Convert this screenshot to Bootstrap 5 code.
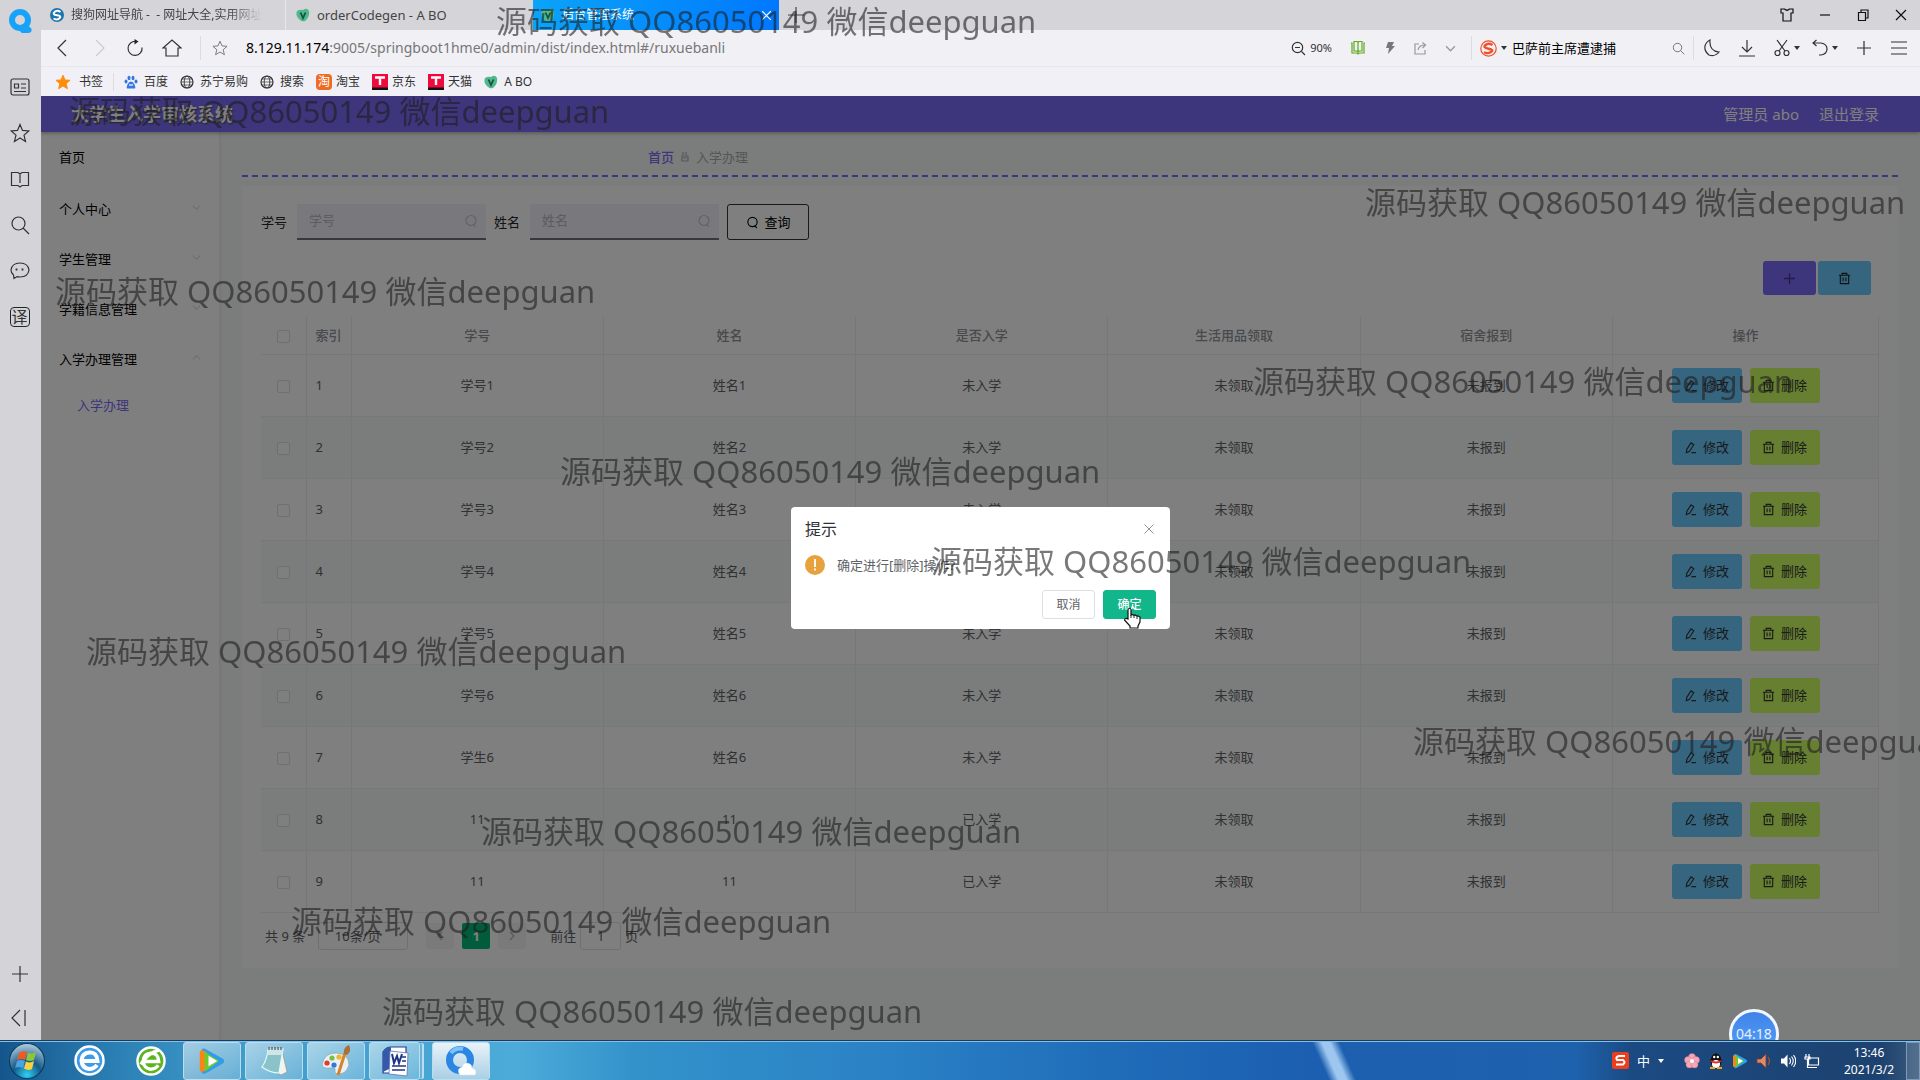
<!DOCTYPE html>
<html lang="zh-CN">
<head>
<meta charset="utf-8">
<meta name="viewport" content="width=device-width, initial-scale=1">
<title>后台管理系统</title>
<link href="https://cdn.jsdelivr.net/npm/bootstrap@5.3.0/dist/css/bootstrap.min.css" rel="stylesheet">
<style>
:root{--ui:"Noto Sans","Noto Sans CJK SC",sans-serif;--purple:#7a6cf8;--line:#ebeef0}
body{font-family:var(--ui);font-size:13px;line-height:20px;color:#222;background:#f6faf8}
svg{display:block;flex:none;fill:none;stroke:currentColor;stroke-width:1.2}
a{color:inherit;text-decoration:none}
.plain{background:none;border:0;padding:0;color:inherit;line-height:1}
/* browser side rail */
.rail{width:41px;background:#d4d3d8;color:#333;padding:9px 2px 12px 0;flex:none}
.rail .tools{gap:26px}
.rail .tools svg,.rail .ends svg{width:20px;height:20px}
.rail .logo{margin-bottom:44px}
/* tab strip */
.tabs{height:30px;background:#d5d4d9;font-size:12px;color:#444}
.tab{height:30px;gap:7px;white-space:nowrap;overflow:hidden}
.tab-one{width:245px;padding:0 16px 0 9px;border-right:1px solid #e8e7ec}
.tab-two{width:247px;padding-left:10px;font-size:13px}
.tab-on{width:246px;padding:0 8px;color:#fff;background:linear-gradient(100deg,#0ba4f8,#0077ff)}
.fade-end{-webkit-mask-image:linear-gradient(90deg,#000 82%,transparent);overflow:hidden}
.winbtns{gap:22px;padding-right:11px;color:#111}
/* address bar */
.addr{height:37px;background:#f1f0f5;border-bottom:1px solid #e6e8ee;color:#333}
.addr-l{padding-left:13px;gap:18px;flex:1 1 auto;min-width:0}
.addr-in{background:none;border:0;outline:0;flex:none;width:150px;padding:0;margin-left:-13px}
.url{font-size:14px;color:#777;padding:0;white-space:nowrap}
.url b{font-weight:400;color:#000}
.vsep{width:1px;height:24px;background:#dddce2;flex:none}
.addr-l .vsep{margin-right:-7px}
.addr-r .vsep{margin:0 -10px 0 -3px}
.addr-r .vsep.after{margin:0 -8px 0 -10px}
.addr-r{gap:18px;padding-right:12px}
.caret{width:0;height:0;border:3px solid transparent;border-top:4px solid #333;border-bottom:0;display:block}
.marks{height:29px;background:#f1f0f6;font-size:12px;color:#333;padding-left:14px;gap:12px}
.marks a{gap:6px}
.marks .wide{gap:8px}
.marks .vsep{height:18px;margin:0 -2px}
.marks a svg,.tab svg{width:14px;height:14px}
/* application */
.topbar{height:36px;background:var(--purple);color:#fff;padding:0 41px 0 30px;box-shadow:0 1px 4px rgba(0,0,0,.35);z-index:1}
.topbar h1{font-size:18px;line-height:36px;font-weight:700;margin:0;text-shadow:1px 1px 2px #444}
.topbar .who{font-size:15px}
.side{width:178px;background:#fff;padding:0 18px;flex:none;color:#000;box-shadow:1px 0 3px rgba(0,0,0,.08)}
.side a{height:50px}
.side a:first-child{margin-bottom:2px}
.side svg{color:#dcdce2;margin-top:-4px}
.side .sub{height:42px;padding-left:18px;color:var(--purple)}
.main{padding:0 22px 0 23px;min-width:0}
.crumbs{height:45px;border-bottom:2px dashed var(--purple);padding:7px 0 0 406px;gap:7px;color:#aaa;margin-bottom:9px}
.crumbs a{color:var(--purple);font-weight:500}
.panel{background:#fff;padding:18px 19px 18px}
.seek label{margin-right:10px}
.field{width:189px;height:36px;background:#f0f0fb;border-bottom:2px solid #70737f;padding-right:8px;margin-right:8px;color:#c4c4d0}
.field input{background:none;border:0;outline:0;padding:0 0 2px 12px;width:100%;min-width:0;color:#222}
.field input::placeholder{color:#b8b8c6;opacity:1}
.btn{--bs-btn-font-size:13px;--bs-btn-line-height:20px;--bs-btn-border-radius:3px;--bs-btn-padding-x:0;--bs-btn-padding-y:0;display:inline-flex;align-items:center;justify-content:center;gap:6px}
.btn-find{width:82px;height:36px;border:1px solid #333;color:#000}
.ops{gap:2px;margin:21px 0}
.btn-sq{width:53px;height:34px;background:#6ccbff;color:#222}
.btn-add{background:var(--purple);color:#45388f}
.btn-act{width:70px;height:35px;background:#6ccbff;color:#333}
.btn-del{background:#cdff63}
.grid-t{table-layout:fixed;width:100%;margin:0;text-align:center;color:#606266;border-collapse:collapse}
.grid-t th,.grid-t td{border:1px solid var(--line);border-width:0 1px 1px 0;padding:0 11px;overflow:hidden;white-space:nowrap}
.grid-t th{height:38px;font-weight:500;color:#909399}
.grid-t td{height:62px}
.grid-t tbody tr:nth-child(even){background:#f5faf9}
.grid-t th:nth-child(2),.grid-t td:nth-child(2){text-align:left;padding:0 9px}
.tick{appearance:none;width:13px;height:13px;border:1px solid #dcdfe6;border-radius:2px;background:#fff;display:block;margin:3px auto 0}
.pager{padding-top:9px;color:#606266}
.pager select{width:90px;height:28px;border:1px solid #dcdfe6;border-radius:3px;background:none;appearance:none;text-align:center;color:#606266;font-size:13px;padding:0 19px 0 8px;margin:0 18px 0 13px}
.pgb{width:28px;height:26px;border:0;border-radius:2px;background:#f4f4f5;color:#b0b3b8;display:flex;align-items:center;justify-content:center;padding:0}
.pgb.now{background:#00b877;color:#fff;font-weight:700}
.pager input{width:41px;height:28px;border:1px solid #dcdfe6;border-radius:3px;background:none;text-align:center;color:#606266;padding:0}
/* confirm dialog */
.shade{position:absolute;inset:0;background:rgba(0,0,0,.5);z-index:5}
.dialog{width:379px;background:#fff;border-radius:4px;padding:12px 14px 10px;color:#606266}
.dialog h2{font-size:16px;line-height:20px;font-weight:400;color:#303133;margin:0}
.dialog .btn{width:53px;height:29px;border:1px solid #dcdfe6;color:#606266;font-size:12px}
.dialog .btn-yes{background:#11b68a;border-color:#11b68a;color:#fff;font-weight:500}
.warn-row{gap:12px;margin:16px 0 15px}
.pointer{position:absolute;right:29px;bottom:0}
/* watermark */
.wm{position:fixed;inset:0;overflow:hidden;pointer-events:none;z-index:20}
.wm span{position:absolute;font-size:31px;line-height:40px;white-space:nowrap;color:rgba(30,30,30,.6)}
/* taskbar */
.task{position:relative;height:40px;flex:none;border-top:1px solid #123f68;box-shadow:inset 0 1px 0 #8cc0e2;z-index:6;color:#fff;
background:linear-gradient(66deg,transparent 0 68.6%,rgba(190,225,255,.8) 69.1% 69.5%,transparent 70%),linear-gradient(90deg,#14568c 0,#2b7fb4 6%,#3f9bca 12%,#4cabd8 27%,#3392ca 33%,#2b83c6 45%,#1f6cb9 58%,#1c5fb0 68%,#1e62ae 82%,#1b4a82 85%,#1d426f 98%,#3c5c7e 100%)}
.task .app{width:58px;height:38px;border:1px solid #b9def0;border-radius:3px;background:linear-gradient(145deg,rgba(255,255,255,.55),rgba(255,255,255,.2));padding:0;display:flex;align-items:center;justify-content:center}
.task .app.live{background:linear-gradient(#e8f3fa,#a9cfe4)}
.task .word{width:51px;box-shadow:3px 0 0 -1px #6bb2d6,5px 0 0 -1px #b9def0}
.clock{font-size:12px;line-height:17px;text-align:center;width:58px}
.peek{width:14px;height:38px;border:1px solid #7d9ab6;background:rgba(255,255,255,.12)}
.timer{position:absolute;left:91.35%;bottom:-19px;transform:translateX(-50%);width:50px;height:50px;border-radius:50%;border:3px solid #f2f7ff;background:linear-gradient(#3f83ea,#58a2f5);color:#e4f0ff;font-size:14px;line-height:44px;text-align:center;z-index:5}
</style>
</head>
<body class="vh-100 d-flex flex-column overflow-hidden">
<svg width="0" height="0" class="position-absolute">
<symbol id="i-search" viewBox="0 0 20 20"><circle cx="8.500" cy="8.500" r="6.500"/><path d="M13 13l6 6"/></symbol>
<symbol id="i-o" viewBox="0 0 14 14"><circle cx="7" cy="6.500" r="5"/><path d="M9.500 10l2 3"/></symbol>
<symbol id="i-down" viewBox="0 0 10 10"><path d="M1 3l4 4 4-4"/></symbol>
<symbol id="i-star" viewBox="0 0 20 20"><path d="M10 1.500l2.500 5.900 6.300.5-4.800 4.200 1.500 6.300L10 15l-5.500 3.400L6 12.100 1.200 7.900l6.300-.5z"/></symbol>
<symbol id="i-globe" viewBox="0 0 14 14"><circle cx="7" cy="7" r="6"/><ellipse cx="7" cy="7" rx="2.800" ry="6" stroke-width=".9"/><path d="M1 7h12M2 4h10M2 10h10" stroke-width=".7"/></symbol>
<symbol id="i-vue" viewBox="0 0 14 14"><path d="M1 3q3-2 6-1 4-3 6 1 1 6-4 10-3 1-5-1-5-4-3-9z" fill="#4eb98a" stroke="none"/><path d="M4.500 4.500L7 10l2.500-5.500" stroke="#1d4f49" stroke-width="1.800"/></symbol>
<symbol id="i-trash" viewBox="0 0 14 14"><path d="M1 3.500h12M4.500 3.500v-2h5v2M2.500 3.500v9h9v-9M5.500 6v4M8.500 6v4"/></symbol>
<symbol id="i-edit" viewBox="0 0 14 14"><path d="M3 9l4.500-7 3 2L6 11l-3.500 1.500zM8 12.500h5"/></symbol>
<symbol id="i-tm" viewBox="0 0 16 16"><path d="M0 0h16v16H0z" fill="#ee0a3c" stroke="none"/><path d="M0 13.500h16V16H0z" fill="#111" stroke="none"/><path d="M3 3.500h10M8 3.500V11" stroke="#fff" stroke-width="2.400"/></symbol>
<symbol id="i-play" viewBox="0 0 32 32"><path d="M4 4q0-3 4-2l20 11q4 3 0 6L9 30q-5 2-5-3z" fill="#2f9ee8" stroke="none"/><path d="M2 7q0-4 4-3l4 2v20l-4 2q-4 1-4-3z" fill="#f98518" stroke="none"/><path d="M7 5l17 11L8 28z" fill="#6ecb2d" stroke="none"/><path d="M12 10l10 6-10 6z" fill="#fff" stroke="none"/></symbol>
</svg>

<div class="d-flex flex-grow-1 position-relative overflow-hidden" style="min-height:0">
<aside class="rail d-flex flex-column align-items-center">
 <svg class="logo" width="24" height="24" viewBox="0 0 24 24"><circle cx="12" cy="11" r="8" stroke="#16a3f8" stroke-width="6"/><path d="M13 18q2-4 6-2l4 3q2 4-2 5h-7q-4-2-1-6z" fill="#16a3f8" stroke="none"/></svg>
 <nav class="tools d-flex flex-column flex-grow-1">
  <button class="plain" aria-label="新闻"><svg viewBox="0 0 20 20"><rect x="1" y="2" width="18" height="16" rx="2"/><path d="M4.500 7h4v4h-4zM11 7h5M11 11h5M4 14.500h12"/></svg></button>
  <button class="plain" aria-label="收藏"><svg><use href="#i-star"/></svg></button>
  <button class="plain" aria-label="阅读"><svg viewBox="0 0 20 20"><path d="M1.500 3.500H8l2 1.500 2-1.500h6.500v13H12L10 18l-2-1.500H1.500zM10 5v9"/></svg></button>
  <button class="plain" aria-label="搜索"><svg><use href="#i-search"/></svg></button>
  <button class="plain" aria-label="消息"><svg viewBox="0 0 20 20"><path d="M4 17.500l-.5-3.500Q1 12 1 9q1-7 9-7t9 7q-1 7-9 7-2 0-3-.4z"/><path d="M6.500 7.500v2M12.500 7.500v2" stroke-width="1.800"/></svg></button>
  <button class="plain border border-dark rounded-1" aria-label="翻译" style="font-size:16px;line-height:18px">译</button>
 </nav>
 <div class="ends d-flex flex-column gap-4"><button class="plain" aria-label="添加"><svg viewBox="0 0 20 20"><path d="M10 2v16M2 10h16"/></svg></button><button class="plain" aria-label="收起"><svg viewBox="0 0 20 20"><path d="M10 2L2 10l8 8M15 2v16"/></svg></button></div>
</aside>

<div class="flex-grow-1 d-flex flex-column" style="min-width:0">
 <div class="tabs d-flex">
  <a href="#" class="tab tab-one d-flex align-items-center"><svg viewBox="0 0 14 14"><circle cx="7" cy="7" r="7" fill="#1b76ae" stroke="none"/><path d="M10.500 4Q7 1.500 4.500 4T7 7.200t2.500 3T3.500 10.500" stroke="#fff" stroke-width="2"/></svg><span class="fade-end">搜狗网址导航 - &nbsp;- 网址大全,实用网址</span></a>
  <a href="#" class="tab tab-two d-flex align-items-center"><svg><use href="#i-vue"/></svg><span>orderCodegen - A BO</span></a>
  <a href="#" class="tab tab-on d-flex align-items-center"><svg><use href="#i-vue"/></svg><span class="flex-grow-1">后台管理系统</span><svg style="width:9px;height:9px" viewBox="0 0 9 9"><path d="M0 0l9 9M9 0L0 9"/></svg></a>
  <button class="plain ms-2" aria-label="新标签页"><svg width="18" height="18" viewBox="0 0 18 18"><path d="M9 1v16M1 9h16"/></svg></button>
  <div class="winbtns d-flex align-items-center ms-auto">
   <button class="plain" aria-label="皮肤"><svg width="16" height="16" viewBox="0 0 16 16"><path d="M2 2h3.500q2.500 2.500 5 0H14v4h-2v8H4V6H2z"/></svg></button>
   <button class="plain" aria-label="最小化"><svg width="16" height="16" viewBox="0 0 16 16"><path d="M3 8h10"/></svg></button>
   <button class="plain" aria-label="还原"><svg width="16" height="16" viewBox="0 0 16 16"><path d="M3.500 5.500h7v8h-7zM6 5V3h7v8h-2"/></svg></button>
   <button class="plain" aria-label="关闭"><svg width="16" height="16" viewBox="0 0 16 16"><path d="M3 3l10 10M13 3L3 13"/></svg></button>
  </div>
 </div>
 <div class="addr d-flex align-items-center">
  <div class="addr-l d-flex align-items-center">
   <button class="plain" aria-label="后退"><svg width="18" height="18" viewBox="0 0 18 18"><path d="M12 1L4 9l8 8"/></svg></button>
   <button class="plain" aria-label="前进" style="color:#ccc"><svg width="18" height="18" viewBox="0 0 18 18"><path d="M6 1l8 8-8 8"/></svg></button>
   <button class="plain" aria-label="刷新"><svg width="18" height="18" viewBox="0 0 18 18"><path d="M10 2.500a7 7 0 106 6"/><path d="M8.500 0l4 2.500-4 3z" fill="#222" stroke="none"/></svg></button>
   <button class="plain" aria-label="主页"><svg width="20" height="18" viewBox="0 0 20 18"><path d="M1 9l9-8 9 8h-3v8H4V9z"/></svg></button>
   <span class="vsep"></span>
   <button class="plain" aria-label="加书签" style="color:#777"><svg width="16" height="16"><use href="#i-star"/></svg></button>
   <span class="url"><b>8.129.11.174</b>:9005/springboot1hme0/admin/dist/index.html#/ruxuebanli</span>
  </div>
  <div class="addr-r d-flex align-items-center">
   <span class="d-flex align-items-center gap-1" style="font-size:11px"><svg width="15" height="15" viewBox="0 0 15 15"><circle cx="6.500" cy="6.500" r="5.200"/><path d="M10.500 10.500l3.500 3.500M4 6.500h5"/></svg>90%</span>
   <button class="plain" aria-label="阅读模式" style="color:#5dab1e"><svg width="16" height="16" viewBox="0 0 16 16"><path d="M1 3h1v10h5l1 1 1-1h5V3h1M4 1.500h3l1 1 1-1h3V11H9l-1 1-1-1H4zM8 3v8"/></svg></button>
   <button class="plain" aria-label="加速" style="color:#777"><svg width="12" height="14" viewBox="0 0 12 14"><path d="M4 1h6L8 5h3L4 13l1-6H2z" fill="#777" stroke="none"/></svg></button>
   <button class="plain" aria-label="分享" style="color:#999"><svg width="13" height="13" viewBox="0 0 13 13"><path d="M5 2H1v10h10V8M4 8q1-5 7-5M8.500.5L11.500 3l-3 3"/></svg></button>
   <button class="plain" aria-label="更多" style="color:#999"><svg width="11" height="11"><use href="#i-down"/></svg></button>
   <span class="vsep"></span>
   <label for="sq" class="d-flex align-items-center gap-1"><svg width="17" height="17" viewBox="0 0 17 17"><circle cx="8.500" cy="8.500" r="7.700" stroke="#f0502b"/><path d="M12.500 5Q8.500 2.500 5.500 5t3 3.700T11 12t-7 .2" stroke="#f0502b" stroke-width="2.400"/></svg><i class="caret"></i></label>
   <input id="sq" class="addr-in" value="巴萨前主席遭逮捕">
   <button class="plain" aria-label="搜索" style="color:#555;margin-left:-8px"><svg width="13" height="13"><use href="#i-search"/></svg></button>
   <span class="vsep after"></span>
   <button class="plain" aria-label="夜间"><svg width="16" height="18" viewBox="0 0 16 18"><path d="M6 1q-1 11 9 12-4 5-10 3-5-4-4-9 1-4 5-6z"/></svg></button>
   <button class="plain" aria-label="下载"><svg width="18" height="18" viewBox="0 0 18 18"><path d="M9 1v12M4 8l5 5 5-5M1 17h16"/></svg></button>
   <button class="plain d-flex align-items-center gap-1" aria-label="截图"><svg width="16" height="18" viewBox="0 0 16 18"><path d="M3 1l8 11M13 1L5 12"/><circle cx="3.500" cy="14" r="2.500"/><circle cx="12.500" cy="14" r="2.500"/></svg><i class="caret"></i></button>
   <button class="plain d-flex align-items-center gap-1" aria-label="撤销" style="margin-left:-6px"><svg width="16" height="18" viewBox="0 0 16 18"><path d="M1 4h8q6 1 6 6t-6 6H7M4.500 1L1 4l3.500 3"/></svg><i class="caret"></i></button>
   <button class="plain" aria-label="添加"><svg width="16" height="18" viewBox="0 0 16 18"><path d="M8 2v14M1 9h14"/></svg></button>
   <button class="plain" aria-label="菜单"><svg width="18" height="18" viewBox="0 0 18 18"><path d="M1 3h16M1 9h16M1 15h16"/></svg></button>
  </div>
 </div>
 <nav class="marks d-flex align-items-center">
  <a href="#" class="wide d-flex align-items-center"><svg style="width:16px;height:16px;fill:#ff8c0a;color:#ff8c0a"><use href="#i-star"/></svg>书签</a><span class="vsep"></span>
  <a href="#" class="d-flex align-items-center"><svg viewBox="0 0 14 14"><g fill="#3577e0" stroke="none"><ellipse cx="2" cy="6.500" rx="1.500" ry="2"/><ellipse cx="5" cy="3" rx="1.500" ry="2.300"/><ellipse cx="9" cy="3" rx="1.500" ry="2.300"/><ellipse cx="12" cy="6.500" rx="1.500" ry="2"/><path d="M7 6.500q2 0 3.500 3t.5 4H3q-1-1 .5-4T7 6.500z"/></g><path d="M5 10h4" stroke="#fff"/></svg>百度</a>
  <a href="#" class="d-flex align-items-center"><svg><use href="#i-globe"/></svg>苏宁易购</a>
  <a href="#" class="d-flex align-items-center"><svg><use href="#i-globe"/></svg>搜索</a>
  <a href="#" class="d-flex align-items-center gap-1"><span class="rounded-1 text-white" style="background:#ee6b24;padding:0 2px;line-height:16px">淘</span>淘宝</a>
  <a href="#" class="d-flex align-items-center gap-1"><svg style="width:16px;height:16px"><use href="#i-tm"/></svg>京东</a>
  <a href="#" class="d-flex align-items-center gap-1"><svg style="width:16px;height:16px"><use href="#i-tm"/></svg>天猫</a>
  <a href="#" class="d-flex align-items-center"><svg><use href="#i-vue"/></svg>A BO</a>
 </nav>

 <div class="flex-grow-1 d-flex flex-column position-relative overflow-hidden">
  <header class="topbar d-flex align-items-center justify-content-between">
   <h1>大学生入学审核系统</h1>
   <div class="who d-flex gap-3"><span>管理员 abo</span><a href="#" class="ps-1">退出登录</a></div>
  </header>
  <div class="d-flex flex-grow-1">
   <nav class="side">
    <a href="#" class="d-flex align-items-center">首页</a>
    <a href="#" class="d-flex align-items-center justify-content-between">个人中心<svg width="9" height="9"><use href="#i-down"/></svg></a>
    <a href="#" class="d-flex align-items-center justify-content-between">学生管理<svg width="9" height="9"><use href="#i-down"/></svg></a>
    <a href="#" class="d-flex align-items-center justify-content-between">学籍信息管理<svg width="9" height="9"><use href="#i-down"/></svg></a>
    <a href="#" class="d-flex align-items-center justify-content-between">入学办理管理<svg width="9" height="9" viewBox="0 0 10 10"><path d="M1 7l4-4 4 4"/></svg></a>
    <a href="#" class="sub d-flex align-items-center">入学办理</a>
   </nav>
   <main class="main flex-grow-1">
    <div class="crumbs d-flex align-items-center"><a href="#">首页</a><svg width="8" height="12" viewBox="0 0 8 12"><path d="M2 1v3M5 1v3M1 5h6v5H1zM2 7h4" stroke="#b0b0b8"/></svg><span>入学办理</span></div>
    <section class="panel">
     <form class="seek d-flex align-items-center text-dark" onsubmit="return false">
      <label for="f1">学号</label>
      <div class="field d-flex align-items-center"><input id="f1" placeholder="学号"><svg width="14" height="14"><use href="#i-o"/></svg></div>
      <label for="f2">姓名</label>
      <div class="field d-flex align-items-center"><input id="f2" placeholder="姓名"><svg width="14" height="14"><use href="#i-o"/></svg></div>
      <button class="btn btn-find"><svg width="13" height="13"><use href="#i-o"/></svg>查询</button>
     </form>
     <div class="ops d-flex justify-content-end pe-2">
      <button class="btn btn-sq btn-add" aria-label="新增"><svg width="11" height="11" viewBox="0 0 10 10"><path d="M5 0v10M0 5h10"/></svg></button>
      <button class="btn btn-sq" aria-label="删除"><svg width="13" height="13"><use href="#i-trash"/></svg></button>
     </div>
     <table class="grid-t">
      <colgroup><col style="width:45px"><col style="width:45px"><col><col><col><col><col><col style="width:266px"></colgroup>
      <thead><tr><th><input type="checkbox" class="tick" aria-label="全选"></th><th>索引</th><th>学号</th><th>姓名</th><th>是否入学</th><th>生活用品领取</th><th>宿舍报到</th><th>操作</th></tr></thead>
      <tbody id="rows"></tbody>
     </table>
     <div class="pager d-flex align-items-center">
      <span class="ps-1">共 9 条</span>
      <select aria-label="每页条数"><option>10条/页</option></select>
      <div class="d-flex gap-2">
      <button class="pgb" aria-label="上一页"><svg width="10" height="10" viewBox="0 0 10 10"><path d="M7 1L3 5l4 4"/></svg></button>
      <button class="pgb now">1</button>
      <button class="pgb" aria-label="下一页"><svg width="10" height="10" viewBox="0 0 10 10"><path d="M3 1l4 4-4 4"/></svg></button></div>
      <label for="pg" class="ms-4 me-1">前往</label><input id="pg" value="1"><span class="ms-1">页</span>
     </div>
    </section>
   </main>
  </div>
  <div class="shade d-flex align-items-center justify-content-center">
   <div class="dialog position-relative" role="dialog" aria-label="提示">
    <div class="d-flex justify-content-between align-items-center"><h2>提示</h2><button class="plain" aria-label="关闭" style="color:#909399;margin-right:2px"><svg width="10" height="10" viewBox="0 0 10 10"><path d="M.5.5l9 9M9.500.5l-9 9" stroke-width="1"/></svg></button></div>
    <div class="warn-row d-flex align-items-center"><svg width="20" height="20" viewBox="0 0 20 20"><circle cx="10" cy="10" r="10" fill="#e6a23c" stroke="none"/><path d="M10 4v8M10 13.500v2" stroke="#fff" stroke-width="1.800"/></svg><span>确定进行[删除]操作?</span></div>
    <div class="d-flex justify-content-end gap-2"><button class="btn">取消</button><button class="btn btn-yes">确定</button></div>
    <svg class="pointer" width="18" height="22" viewBox="0 0 18 22"><path d="M5 12V2.500q1.500-2.500 3 0V8l1-.5 2 .8 1-.3 2 1 1-.2 2 1.200V15l-2 4v2H7v-2l-5.500-6q.5-2.500 3.500-1z" fill="#fff" stroke="#111" stroke-width="1.200"/><path d="M8 8v3M11 8.500V11M14 9.500V12" stroke="#111" stroke-width=".9"/></svg>
   </div>
  </div>
 </div>
</div>
<div class="timer">04:18</div>
</div>

<footer class="task d-flex align-items-center">
 <button class="plain" aria-label="开始" style="margin-left:8px"><svg width="38" height="38" viewBox="0 0 38 38"><defs><radialGradient id="orb" cx=".5" cy=".9" r=".9"><stop offset="0" stop-color="#2fd0f5"/><stop offset=".45" stop-color="#145a88"/><stop offset="1" stop-color="#b5cfdf"/></radialGradient></defs><circle cx="19" cy="19" r="17.500" fill="url(#orb)" stroke="#0f3c60"/><g stroke="none"><path d="M11 11q4-3 8-1l-2 8q-4-2-8 0z" fill="#ee5a24"/><path d="M20 10.500q4 2 8-.5l-2 8q-4 2-8 0z" fill="#8cc63e"/><path d="M9 19q4-2 8 0l-2 7q-4-2-8 0z" fill="#4ba3e3"/><path d="M18 19.500q4 2 8-.5l-2 8q-4 2-8-.5z" fill="#fcd13b"/></g></svg></button>
 <button class="plain" aria-label="IE" style="margin:0 28px"><svg width="31" height="31" viewBox="0 0 31 31"><circle cx="15.500" cy="15.500" r="14" fill="#3d9be9" stroke="#fff" stroke-width="2.500"/><path d="M23 20q-3 4-8 4-7-1-7.500-8.500Q8 8 15.500 7.500T23.500 16H8" stroke="#fff" stroke-width="4"/></svg></button>
 <button class="plain" aria-label="360浏览器" style="margin:0 17px 0 3px"><svg width="30" height="30" viewBox="0 0 31 31"><circle cx="15.500" cy="15.500" r="14" fill="#5cb51c" stroke="#fff" stroke-width="2.500"/><path d="M23 20q-3 4-8 4-7-1-7.500-8.500Q8 8 15.500 7.500T23.500 16H8M5 19Q11 8 24 4" stroke="#fff" stroke-width="3.500"/></svg></button>
 <div class="d-flex gap-1">
  <button class="app" aria-label="腾讯视频"><svg width="30" height="28"><use href="#i-play"/></svg></button>
  <button class="app" aria-label="记事本"><svg width="30" height="32" viewBox="0 0 30 32"><path d="M23 5l5 22-6 3-6-4z" fill="#f4f2ea" stroke="#8b8b80" stroke-width=".6"/><path d="M9 4h15l-4 24q-9 0-17-6 5-7 6-18z" fill="#8cc3ca" stroke="#dff"/><path d="M9 4h15l-1 6H8z" fill="#cfe6e8" stroke="none"/><path d="M10 2v3M13 2v3M16 2v3M19 2v3M22 2v3" stroke="#555"/></svg></button>
  <button class="app" aria-label="画图"><svg width="32" height="34" viewBox="0 0 32 34"><path d="M2 20Q5 8 17 9t12 12q-3 10-12 9-3-1-2-4t-5-2q-8 1-8-4z" fill="#e8f1f7" stroke="#8aa" stroke-width=".8"/><g stroke="none"><circle cx="7" cy="19" r="2.600" fill="#e03a31"/><circle cx="12" cy="14" r="2.600" fill="#7cc041"/><circle cx="19" cy="13" r="2.600" fill="#f3b52b"/><circle cx="14" cy="21" r="2.600" fill="#3a75d0"/></g><path d="M18 31l7-22" stroke="#d9822b" stroke-width="3"/><path d="M24 10q-1-7 5-9 3 6-2 10z" fill="#a8713b" stroke="none"/></svg></button>
  <button class="app word" aria-label="Word"><svg width="30" height="32" viewBox="0 0 30 32"><path d="M3 28V7q3-5 8-5h15v26z" fill="#fff" stroke="#233f8f"/><path d="M3 27V7q3-5 8-5v21z" fill="#3459ab" stroke="none"/><path d="M10 6l18 2-1 23-18-2z" fill="#fff" stroke="#5a73b5" stroke-width=".8"/><path d="M12 9l2 9 3-7 2 7 3-9" stroke="#1e3586" stroke-width="2"/><path d="M22 12h4M22 16h4M12 21h14M12 25h13" stroke="#1e3586" stroke-width="1.600"/></svg></button>
  <button class="app live ms-2" aria-label="QQ浏览器"><svg width="32" height="32" viewBox="0 0 32 32"><circle cx="15" cy="15" r="10.500" stroke="#2a86e2" stroke-width="7"/><path d="M6 8Q11 2 18 4" stroke="#7fc2f8" stroke-width="4"/><path d="M15 30q-4-6 2-8 2-6 8-3 2 1 2 4 6 2 3 7z" fill="#fff" stroke="#cfe3f2" stroke-width=".6"/></svg></button>
 </div>
 <div class="ms-auto d-flex align-items-center">
  <svg width="17" height="17" viewBox="0 0 17 17"><rect width="17" height="17" rx="2" fill="#ec3e1e" stroke="none"/><path d="M13 4H7Q3 5 5 8h6q3 2 0 4.500H4" stroke="#fff" stroke-width="2"/></svg>
  <span class="ms-2 me-1">中</span><i class="caret ms-1" style="border-top-color:#fff"></i>
  <div class="d-flex align-items-center gap-2" style="margin:0 20px">
   <svg width="16" height="16" viewBox="0 0 16 16"><g fill="#f3a7bd" stroke="#c66" stroke-width=".4"><circle cx="8" cy="4" r="3.500"/><circle cx="4" cy="7" r="3.500"/><circle cx="12" cy="7" r="3.500"/><circle cx="5.500" cy="11.500" r="3.500"/><circle cx="10.500" cy="11.500" r="3.500"/></g><circle cx="8" cy="8" r="2" fill="#fff" stroke="none"/></svg>
   <svg width="16" height="16" viewBox="0 0 16 16"><ellipse cx="8" cy="8" rx="5.500" ry="7.500" fill="#111" stroke="none"/><ellipse cx="8" cy="11" rx="4" ry="4" fill="#fff" stroke="none"/><path d="M3 8q5 3 10 0" stroke="#e22" stroke-width="2"/><circle cx="6.200" cy="4" r="1.200" fill="#fff" stroke="none"/><circle cx="9.800" cy="4" r="1.200" fill="#fff" stroke="none"/><path d="M2 15h5M9 15h5" stroke="#f5a21b" stroke-width="1.800"/></svg>
   <svg width="16" height="16"><use href="#i-play"/></svg>
   <svg width="16" height="16" viewBox="0 0 16 16"><path d="M1 6h4l5-5v14l-5-5H1z" fill="#d98b6a" stroke="#8a3b22" stroke-width=".8"/><path d="M12 4q3 4 0 8" stroke="#a5533a"/></svg>
   <svg width="16" height="16" viewBox="0 0 16 16"><path d="M1 5.500h3l3.500-4v13l-3.500-4H1z" fill="#fff" stroke="none"/><path d="M9.500 5q2 3 0 6M11.500 3.500q3.500 4.500 0 9M13.500 2q4.500 6 0 12" stroke-width="1.100"/></svg>
   <svg width="16" height="16" viewBox="0 0 16 16"><path d="M4.500 5h10v7h-10zM7 14.500h6M2 1v3M5 1v3M1 4h5v2H1zM3.500 6v8.500H8"/></svg>
  </div>
  <div class="clock">13:46<br>2021/3/2</div>
  <button class="peek ms-2 p-0" aria-label="显示桌面"></button>
 </div>
</footer>

<div class="wm" id="wm"></div>
<script>
const data=[["学号1","姓名1","未入学"],["学号2","姓名2","未入学"],["学号3","姓名3","未入学"],["学号4","姓名4","未入学"],["学号5","姓名5","未入学"],["学号6","姓名6","未入学"],["学生6","姓名6","未入学"],["11","11","已入学"],["11","11","已入学"]];
document.getElementById("rows").innerHTML=data.map((r,i)=>`<tr><td><input type="checkbox" class="tick" aria-label="选择第${i+1}行"></td><td>${i+1}</td><td>${r[0]}</td><td>${r[1]}</td><td>${r[2]}</td><td>未领取</td><td>未报到</td><td><button class="btn btn-act me-2"><svg width="13" height="13"><use href="#i-edit"/></svg>修改</button><button class="btn btn-act btn-del"><svg width="13" height="13"><use href="#i-trash"/></svg>删除</button></td></tr>`).join("");
const marks=[[496,21],[69,111],[1365,202],[55,291],[1253,381],[560,471],[931,561],[86,651],[1413,741],[481,831],[291,921],[382,1011]];
document.getElementById("wm").innerHTML=marks.map(m=>`<span style="left:${m[0]}px;top:${m[1]-20}px">源码获取 QQ86050149 微信deepguan</span>`).join("");
</script>
<script src="https://cdn.jsdelivr.net/npm/bootstrap@5.3.0/dist/js/bootstrap.bundle.min.js"></script>
</body>
</html>
